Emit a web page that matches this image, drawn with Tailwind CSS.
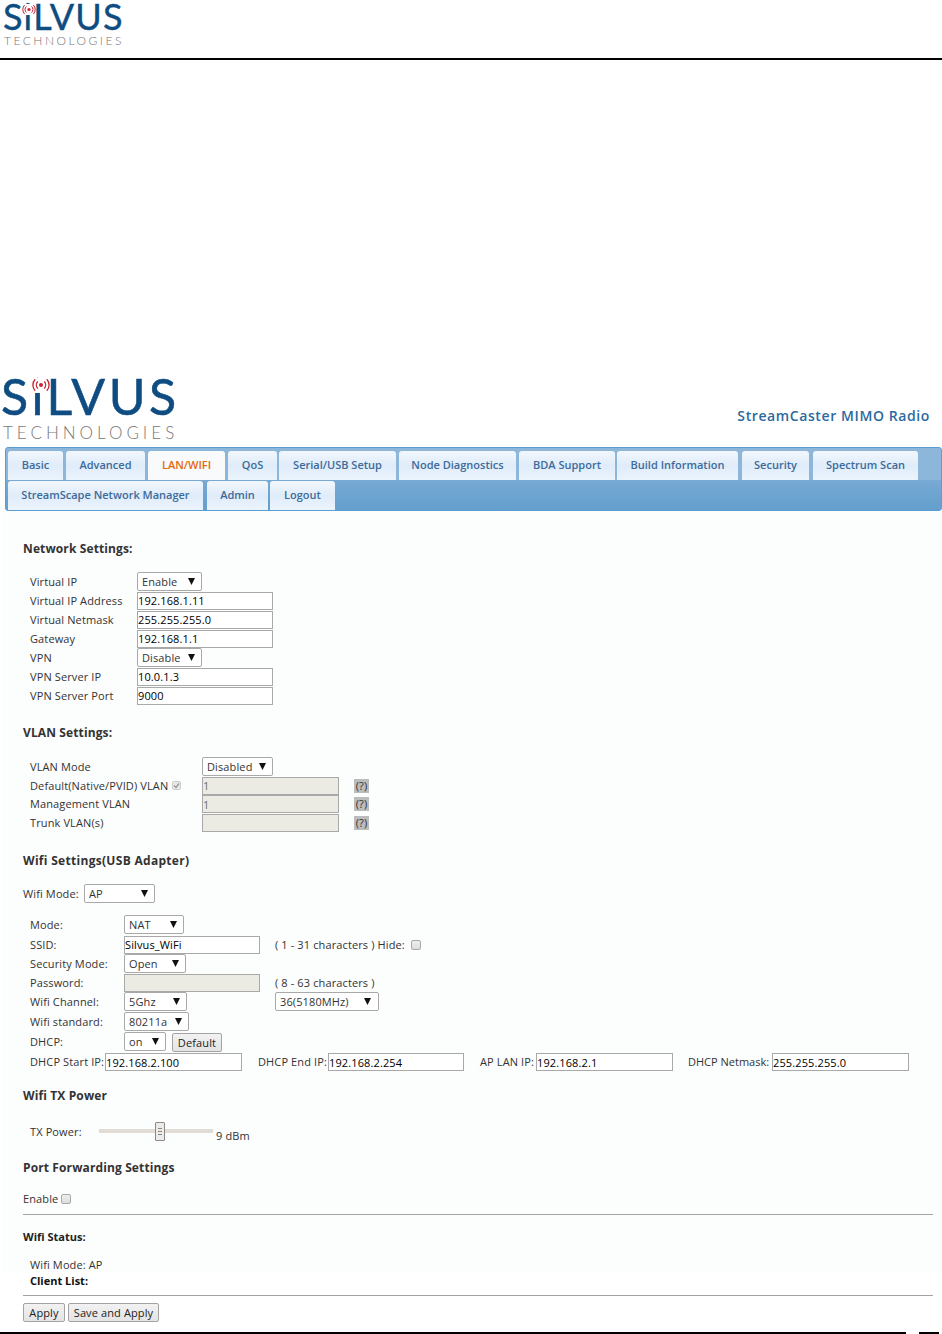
<!DOCTYPE html>
<html lang="en">
<head>
<meta charset="UTF-8">
<title>StreamCaster MIMO Radio</title>
<script src="https://cdn.jsdelivr.net/npm/@tailwindcss/browser@4"></script>
</head>
<body class="bg-white">
<div class="w-[942px] h-[1334px] overflow-hidden font-['Open_Sans',sans-serif] text-[11px] leading-[16px] tracking-[.12px] text-[#333]">

  <!-- page header -->
  <div class="h-[60px] border-b-2 border-black pl-[3px]">
    <div class="relative w-[124px] font-['Lato',sans-serif]">
      <div class="text-[36px] leading-[32px] h-[32px] tracking-[1.2px] text-[#0f4c81] [-webkit-text-stroke:0.4px_#0f4c81]">SiLVUS</div>
      <svg class="absolute left-[18px] top-[4px]" width="16" height="11" viewBox="0 0 16 11" fill="none">
        <rect x="3" y="0" width="10" height="11" fill="#fff"/>
        <circle cx="8" cy="5.5" r="1.6" fill="#c8202f"/>
        <path d="M5.4 2.5a4 4 0 0 0 0 6M10.6 2.5a4 4 0 0 1 0 6M3.6 1a6.5 6.5 0 0 0 0 9M12.4 1a6.5 6.5 0 0 1 0 9" stroke="#c8202f"/>
      </svg>
      <div class="mt-[2px] ml-[1px] text-[12px] leading-[14px] font-light tracking-[2.5px] text-[#777] whitespace-nowrap">TECHNOLOGIES</div>
    </div>
  </div>

  <!-- app header -->
  <div class="mt-[310px] h-[77px] flex justify-between pl-[1px] pr-[12px]">
    <div class="relative w-[180px] pt-[1px] font-['Lato',sans-serif]">
      <div class="text-[50px] leading-[50px] h-[50px] tracking-[3.5px] text-[#0f4c81] [-webkit-text-stroke:0.6px_#0f4c81]">SiLVUS</div>
      <svg class="absolute left-[30px] top-[8px]" width="20" height="15" viewBox="0 0 20 15" fill="none">
        <rect x="3" y="0" width="14" height="15" fill="#fff"/>
        <circle cx="10" cy="7" r="2" fill="#c8202f"/>
        <path d="M6.8 3.5a5 5 0 0 0 0 7M13.2 3.5a5 5 0 0 1 0 7M4.2 1.2a8.5 8.5 0 0 0 0 11.6M15.8 1.2a8.5 8.5 0 0 1 0 11.6" stroke="#c8202f" stroke-width="1.3"/>
      </svg>
      <div class="mt-[2px] ml-[2px] text-[17px] leading-[20px] font-light tracking-[4px] text-[#777] whitespace-nowrap">TECHNOLOGIES</div>
    </div>
    <div class="mt-[36px] text-[14px] leading-[19px] font-semibold tracking-[.6px] text-[#2c6a9d]">StreamCaster MIMO Radio</div>
  </div>

  <!-- tabs -->
  <div class="ml-[5px] h-[64px] overflow-hidden rounded-[3px] border border-[#5c9dd2] bg-[#8db7da] font-semibold tracking-normal text-[#3c6b9b]">
    <div class="mt-[3px] flex h-[29px] pl-[2px] text-center leading-[28px]">
      <div class="w-[55px] rounded-t-[3px] bg-gradient-to-b from-[#f2f7fd] via-[#dfecf9] to-[#ebf4fd]">Basic</div>
      <div class="ml-[3px] w-[79px] rounded-t-[3px] bg-gradient-to-b from-[#f2f7fd] via-[#dfecf9] to-[#ebf4fd]">Advanced</div>
      <div class="ml-[3px] w-[77px] rounded-t-[3px] bg-[#f8fafb] text-[#e4690c]">LAN/WIFI</div>
      <div class="ml-[3px] w-[49px] rounded-t-[3px] bg-gradient-to-b from-[#f2f7fd] via-[#dfecf9] to-[#ebf4fd]">QoS</div>
      <div class="ml-[2px] w-[117px] rounded-t-[3px] bg-gradient-to-b from-[#f2f7fd] via-[#dfecf9] to-[#ebf4fd]">Serial/USB Setup</div>
      <div class="ml-[3px] w-[117px] rounded-t-[3px] bg-gradient-to-b from-[#f2f7fd] via-[#dfecf9] to-[#ebf4fd]">Node Diagnostics</div>
      <div class="ml-[3px] w-[96px] rounded-t-[3px] bg-gradient-to-b from-[#f2f7fd] via-[#dfecf9] to-[#ebf4fd]">BDA Support</div>
      <div class="ml-[2px] w-[121px] rounded-t-[3px] bg-gradient-to-b from-[#f2f7fd] via-[#dfecf9] to-[#ebf4fd]">Build Information</div>
      <div class="ml-[4px] w-[67px] rounded-t-[3px] bg-gradient-to-b from-[#f2f7fd] via-[#dfecf9] to-[#ebf4fd]">Security</div>
      <div class="ml-[4px] w-[105px] rounded-t-[3px] bg-gradient-to-b from-[#f2f7fd] via-[#dfecf9] to-[#ebf4fd]">Spectrum Scan</div>
    </div>
    <div class="flex h-[30px] bg-gradient-to-b from-[#78aad4] to-[#639ecd] pl-[2px] pt-px text-center leading-[27px]">
      <div class="w-[195px] rounded-t-[3px] bg-gradient-to-b from-[#f2f7fd] via-[#dfecf9] to-[#ebf4fd]">StreamScape Network Manager</div>
      <div class="ml-[4px] w-[61px] rounded-t-[3px] bg-gradient-to-b from-[#f2f7fd] via-[#dfecf9] to-[#ebf4fd]">Admin</div>
      <div class="ml-[2px] w-[65px] rounded-t-[3px] bg-gradient-to-b from-[#f2f7fd] via-[#dfecf9] to-[#ebf4fd]">Logout</div>
    </div>
  </div>

  <!-- settings, tinted part -->
  <div class="ml-[3px] h-[761px] bg-[#fcfdfd] pl-[20px] pr-[9px] pt-[29px]">

    <h3 class="h-[16px] text-[12px] leading-[17px] font-bold text-[#333]">Network Settings:</h3>
    <div class="mt-[16px] pl-[7px]">
      <div class="flex h-[19px] items-center"><div class="w-[107px]">Virtual IP</div>
        <div class="flex w-[65px] h-[19px] items-center justify-between rounded-[2px] border border-[#a9a9a9] bg-white pl-[4px] pr-[6px]">Enable<svg width="7" height="7" viewBox="0 0 7 7"><path d="M0 0h7L3.5 7z" fill="#111"/></svg></div></div>
      <div class="flex h-[19px] items-center"><div class="w-[107px]">Virtual IP Address</div><input value="192.168.1.11" class="w-[136px] h-[18px] border border-[#a9a9a9] bg-white text-black"></div>
      <div class="flex h-[19px] items-center"><div class="w-[107px]">Virtual Netmask</div><input value="255.255.255.0" class="w-[136px] h-[18px] border border-[#a9a9a9] bg-white text-black"></div>
      <div class="flex h-[19px] items-center"><div class="w-[107px]">Gateway</div><input value="192.168.1.1" class="w-[136px] h-[18px] border border-[#a9a9a9] bg-white text-black"></div>
      <div class="flex h-[19px] items-center"><div class="w-[107px]">VPN</div>
        <div class="flex w-[65px] h-[19px] items-center justify-between rounded-[2px] border border-[#a9a9a9] bg-white pl-[4px] pr-[6px]">Disable<svg width="7" height="7" viewBox="0 0 7 7"><path d="M0 0h7L3.5 7z" fill="#111"/></svg></div></div>
      <div class="flex h-[19px] items-center"><div class="w-[107px]">VPN Server IP</div><input value="10.0.1.3" class="w-[136px] h-[18px] border border-[#a9a9a9] bg-white text-black"></div>
      <div class="flex h-[19px] items-center"><div class="w-[107px]">VPN Server Port</div><input value="9000" class="w-[136px] h-[18px] border border-[#a9a9a9] bg-white text-black"></div>
    </div>

    <h3 class="mt-[19px] h-[16px] text-[12px] leading-[18px] font-bold text-[#333]">VLAN Settings:</h3>
    <div class="mt-[17px] pl-[7px]">
      <div class="flex h-[19px] items-center"><div class="w-[172px]">VLAN Mode</div>
        <div class="flex w-[71px] h-[19px] items-center justify-between rounded-[2px] border border-[#a9a9a9] bg-white pl-[4px] pr-[6px]">Disabled<svg width="7" height="7" viewBox="0 0 7 7"><path d="M0 0h7L3.5 7z" fill="#111"/></svg></div></div>
      <div class="flex h-[19px] items-center"><div class="flex w-[172px] items-center">Default(Native/PVID) VLAN
          <svg class="ml-[4px]" width="9" height="9" viewBox="0 0 9 9"><rect x=".5" y=".5" width="8" height="8" rx="1.5" fill="#e8e8e8" stroke="#ccc"/><path d="M2 4.5l2 2 3-4" fill="none" stroke="#9a9a9a" stroke-width="1.4"/></svg></div>
        <input disabled value="1" class="w-[137px] h-[18px] border border-[#a9a9a9] bg-[#ebebe4] text-[#6d6d6d]">
        <span class="ml-[15px] w-[15px] h-[14px] bg-[#bcbcbc] text-center leading-[14px]">(?)</span></div>
      <div class="flex h-[18px] items-center"><div class="w-[172px]">Management VLAN</div>
        <input disabled value="1" class="w-[137px] h-[18px] border border-[#a9a9a9] bg-[#ebebe4] text-[#6d6d6d]">
        <span class="ml-[15px] w-[15px] h-[14px] bg-[#bcbcbc] text-center leading-[14px]">(?)</span></div>
      <div class="flex h-[19px] items-center"><div class="w-[172px]">Trunk VLAN(s)</div>
        <input disabled class="w-[137px] h-[18px] border border-[#a9a9a9] bg-[#ebebe4]">
        <span class="ml-[15px] w-[15px] h-[14px] bg-[#bcbcbc] text-center leading-[14px]">(?)</span></div>
    </div>

    <h3 class="mt-[20px] h-[16px] text-[12px] leading-[18px] font-bold tracking-[.3px] text-[#333]">Wifi Settings(USB Adapter)</h3>
    <div class="mt-[16px] flex h-[19px] items-center"><span class="w-[61px]">Wifi Mode:</span>
      <div class="flex w-[71px] h-[19px] items-center justify-between rounded-[2px] border border-[#a9a9a9] bg-white pl-[4px] pr-[6px]">AP<svg width="7" height="7" viewBox="0 0 7 7"><path d="M0 0h7L3.5 7z" fill="#111"/></svg></div></div>

    <div class="mt-[12px] pl-[7px]">
      <div class="flex h-[19px] items-center"><div class="w-[94px]">Mode:</div>
        <div class="flex w-[60px] h-[19px] items-center justify-between rounded-[2px] border border-[#a9a9a9] bg-white pl-[4px] pr-[6px]">NAT<svg width="7" height="7" viewBox="0 0 7 7"><path d="M0 0h7L3.5 7z" fill="#111"/></svg></div></div>
      <div class="mt-px flex h-[19px] items-center"><div class="w-[94px]">SSID:</div>
        <input value="Silvus_WiFi" class="w-[136px] h-[18px] border border-[#a9a9a9] bg-white text-black">
        <span class="ml-[15px]">( 1 - 31 characters ) Hide:</span>
        <input type="checkbox" class="ml-[6px] w-[10px] h-[10px] appearance-none rounded-[2px] border border-[#aaa] bg-gradient-to-b from-[#eee] to-[#ddd]"></div>
      <div class="flex h-[19px] items-center"><div class="w-[94px]">Security Mode:</div>
        <div class="flex w-[62px] h-[19px] items-center justify-between rounded-[2px] border border-[#a9a9a9] bg-white pl-[4px] pr-[6px]">Open<svg width="7" height="7" viewBox="0 0 7 7"><path d="M0 0h7L3.5 7z" fill="#111"/></svg></div></div>
      <div class="mt-px flex h-[18px] items-center"><div class="w-[94px]">Password:</div>
        <input disabled class="w-[136px] h-[18px] border border-[#a9a9a9] bg-[#ebebe4]">
        <span class="ml-[15px]">( 8 - 63 characters )</span></div>
      <div class="flex h-[19px] items-center"><div class="w-[94px]">Wifi Channel:</div>
        <div class="flex w-[63px] h-[19px] items-center justify-between rounded-[2px] border border-[#a9a9a9] bg-white pl-[4px] pr-[6px]">5Ghz<svg width="7" height="7" viewBox="0 0 7 7"><path d="M0 0h7L3.5 7z" fill="#111"/></svg></div>
        <div class="ml-[88px] flex w-[104px] h-[19px] items-center justify-between rounded-[2px] border border-[#a9a9a9] bg-white pl-[4px] pr-[7px]">36(5180MHz)<svg width="7" height="7" viewBox="0 0 7 7"><path d="M0 0h7L3.5 7z" fill="#111"/></svg></div></div>
      <div class="mt-px flex h-[19px] items-center"><div class="w-[94px]">Wifi standard:</div>
        <div class="flex w-[65px] h-[19px] items-center justify-between rounded-[2px] border border-[#a9a9a9] bg-white pl-[4px] pr-[6px]">80211a<svg width="7" height="7" viewBox="0 0 7 7"><path d="M0 0h7L3.5 7z" fill="#111"/></svg></div></div>
      <div class="mt-px flex h-[19px] items-center"><div class="w-[94px]">DHCP:</div>
        <div class="flex w-[42px] h-[19px] items-center justify-between rounded-[2px] border border-[#a9a9a9] bg-white pl-[4px] pr-[6px]">on<svg width="7" height="7" viewBox="0 0 7 7"><path d="M0 0h7L3.5 7z" fill="#111"/></svg></div>
        <button class="ml-[6px] mt-[2px] w-[50px] h-[19px] rounded-[2px] border border-[#a3a3a3] bg-gradient-to-b from-[#f2f2f2] to-[#e4e4e4] text-[#222]">Default</button></div>
      <div class="mt-[2px] flex h-[18px] items-center">
        <span class="w-[75px] whitespace-nowrap">DHCP Start IP:</span><input value="192.168.2.100" class="w-[137px] h-[18px] border border-[#a9a9a9] bg-white text-black">
        <span class="ml-[16px] w-[70px] whitespace-nowrap">DHCP End IP:</span><input value="192.168.2.254" class="w-[136px] h-[18px] border border-[#a9a9a9] bg-white text-black">
        <span class="ml-[16px] w-[56px] whitespace-nowrap">AP LAN IP:</span><input value="192.168.2.1" class="w-[137px] h-[18px] border border-[#a9a9a9] bg-white text-black">
        <span class="ml-[15px] w-[84px] whitespace-nowrap tracking-normal">DHCP Netmask:</span><input value="255.255.255.0" class="w-[137px] h-[18px] border border-[#a9a9a9] bg-white text-black">
      </div>
    </div>

    <h3 class="mt-[16px] h-[16px] text-[12px] leading-[18px] font-bold text-[#333]">Wifi TX Power</h3>
    <div class="mt-[19px] flex h-[19px] pl-[7px]">
      <span class="w-[69px] mt-[2px]">TX Power:</span>
      <div class="relative mt-[7px] w-[114px] h-[4px] bg-[#e2dcd6]">
        <div class="absolute left-[56px] top-[-7px] flex h-[19px] w-[10px] flex-col items-center justify-center gap-[2px] rounded-[1px] border border-[#8a8a8a] bg-[#eeebe7]">
          <div class="h-px w-[4px] bg-[#888]"></div><div class="h-px w-[4px] bg-[#888]"></div><div class="h-px w-[4px] bg-[#888]"></div>
        </div>
      </div>
      <span class="ml-[3px] mt-[6px]">9 dBm</span>
    </div>

    <h3 class="mt-[18px] h-[16px] text-[12px] leading-[18px] font-bold text-[#333]">Port Forwarding Settings</h3>
    <div class="mt-[16px] flex h-[16px] items-center">Enable
      <input type="checkbox" class="ml-[3px] w-[10px] h-[10px] appearance-none rounded-[2px] border border-[#aaa] bg-gradient-to-b from-[#eee] to-[#ddd]"></div>
    <hr class="mt-[7px] border-t border-[#a3a3a3]">

    <h3 class="mt-[14px] h-[16px] text-[11px] font-bold tracking-normal text-[#222]">Wifi Status:</h3>
    <div class="mt-[12px] h-[15px] pl-[7px] leading-[15px]">Wifi Mode: AP</div>
  </div>

  <!-- bottom of the form -->
  <div class="pl-[23px] pr-[9px]">
    <div class="h-[17px] pl-[7px] font-bold tracking-normal leading-[18px] text-[#111]">Client List:</div>
    <hr class="mt-[6px] border-t border-[#a3a3a3]">
    <div class="mt-[7px] flex gap-[3px]">
      <button class="w-[42px] h-[19px] rounded-[2px] border border-[#a3a3a3] bg-gradient-to-b from-[#f2f2f2] to-[#e4e4e4] text-[#222]">Apply</button>
      <button class="w-[91px] h-[19px] rounded-[2px] border border-[#a3a3a3] bg-gradient-to-b from-[#f2f2f2] to-[#e4e4e4] text-[#222]">Save and Apply</button>
    </div>
  </div>

  <!-- page footer rule -->
  <div class="mt-[10px] flex gap-[13px]">
    <div class="h-[2px] w-[906px] bg-black"></div>
    <div class="h-[2px] w-[20px] bg-black"></div>
  </div>
</div>
</body>
</html>
